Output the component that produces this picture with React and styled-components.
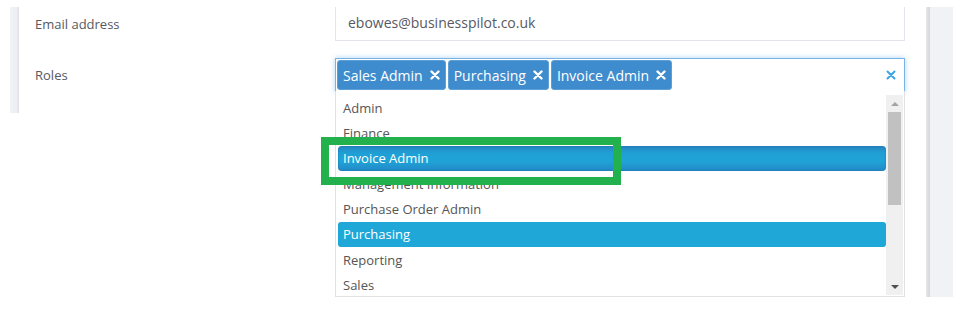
import React from 'react';
import styled, { createGlobalStyle } from 'styled-components';

const GlobalStyle = createGlobalStyle`
  html, body {
    margin: 0;
    padding: 0;
    background: #fff;
  }
  body {
    font-family: "Open Sans", "Liberation Sans", sans-serif;
  }
`;

// whole visible area, the card sits in it with a grey gutter on the right
const Page = styled.div`
  position: relative;
  width: 953px;
  height: 332px;
  overflow: hidden;
  box-sizing: border-box;
  padding-top: 7px;
  display: flex;
  align-items: flex-start;
`;

const LeftGap = styled.div`
  width: 10px;
  flex-shrink: 0;
`;

const Card = styled.div`
  width: 916px;
  flex-shrink: 0;
  display: flex;
  align-items: stretch;
`;

const CardEdge = styled.div`
  width: 9px;
  flex-shrink: 0;
  background: linear-gradient(to right, #f2f3f7 0%, #eceef3 75%, #dfe0e6 100%);
`;

const CardBody = styled.div`
  flex: 1;
  padding: 0 21px 21px 16px;
  display: flex;
  flex-direction: column;
  gap: 17px;
`;

const FormRow = styled.div`
  display: grid;
  grid-template-columns: 300px 570px;
  align-items: center;
`;

const Label = styled.div`
  font-size: 13px;
  color: #575962;
  padding-bottom: 1px;
`;

// top edge of this input is cut off in the shot
const TextInput = styled.div`
  height: 34px;
  box-sizing: border-box;
  border: 1px solid #e2e5ec;
  border-top: none;
  padding: 0 12px 3px;
  display: flex;
  align-items: center;
  font-size: 14px;
  color: #575962;
`;

const Select = styled.div`
  position: relative;
  height: 34px;
  box-sizing: border-box;
  border: 1px solid #7ab3e6;
  box-shadow: 0 0 5px rgba(102, 175, 233, 0.55);
  padding: 1px;
  display: flex;
  align-items: stretch;
  gap: 2px;
`;

const Tag = styled.div`
  display: flex;
  align-items: center;
  gap: 7px;
  padding: 0 5px 0 5px;
  background: #3e8ccd;
  border: 1px solid #5e9fd6;
  border-radius: 3px;
  color: #fff;
  font-size: 14px;
  white-space: nowrap;
`;

const ClearButton = styled.div`
  margin-left: auto;
  padding-right: 7px;
  display: flex;
  align-items: center;
`;

const Dropdown = styled.div`
  position: absolute;
  top: 100%;
  left: -1px;
  right: -1px;
  height: 206px;
  box-sizing: border-box;
  background: #fff;
  border: 1px solid #e2e2e6;
  border-top: none;
  padding: 4px 1px 0 2px;
  display: flex;
  align-items: flex-start;
  overflow: hidden;
  z-index: 2;
`;

const OptionList = styled.div`
  flex: 1;
  display: flex;
  flex-direction: column;
`;

const Option = styled.div`
  height: 25.33px;
  flex-shrink: 0;
  display: flex;
  align-items: center;
  padding: 0 5px;
  font-size: 13px;
  color: ${(p) => (p.$active || p.$selected ? '#fff' : '#555')};
  border-radius: ${(p) => (p.$active ? '4px' : '3px')};
  background: ${(p) =>
    p.$active
      ? 'linear-gradient(to bottom, #2784c1 0%, #1f9fd5 28%, #1fa4d7 60%, #2388c6 100%)'
      : p.$selected
      ? '#1fa7d7'
      : 'transparent'};
  box-shadow: ${(p) => (p.$active ? 'inset 0 0 2px rgba(20, 90, 150, 0.6)' : 'none')};
`;

const Scrollbar = styled.div`
  width: 17px;
  height: 200px;
  flex-shrink: 0;
  background: #f0f0f0;
  display: flex;
  flex-direction: column;
  align-items: center;
`;

const ArrowBox = styled.div`
  height: 17px;
  display: flex;
  align-items: center;
  justify-content: center;
`;

const Arrow = styled.div`
  width: 0;
  height: 0;
  border-left: 4px solid transparent;
  border-right: 4px solid transparent;
  ${(p) =>
    p.$down
      ? 'border-top: 4px solid #505050;'
      : 'border-bottom: 4px solid #a3a3a3;'}
`;

const Thumb = styled.div`
  width: 13px;
  height: 93px;
  background: #c1c1c1;
`;

const ScrollSpace = styled.div`
  flex: 1;
`;

const RightShade = styled.div`
  width: 4px;
  height: 290px;
  flex-shrink: 0;
  background: linear-gradient(to right, #e6e7ea, #d6d7db);
`;

const RightPanel = styled.div`
  flex: 1;
  height: 290px;
  background: #f1f2f6;
`;

// green annotation box drawn over the screenshot
const Highlight = styled.div`
  position: absolute;
  left: 321px;
  top: 137px;
  width: 300px;
  height: 48px;
  box-sizing: border-box;
  border: 8px solid #22b14c;
  z-index: 5;
`;

const Cross = ({ color, size = 10, width = 2.4 }) => (
  <svg width={size} height={size} viewBox="0 0 10 10">
    <path d="M1.5 1.5 L8.5 8.5 M8.5 1.5 L1.5 8.5" stroke={color} strokeWidth={width} strokeLinecap="round" />
  </svg>
);

const selectedRoles = ['Sales Admin', 'Purchasing', 'Invoice Admin'];

const options = [
  'Admin',
  'Finance',
  'Invoice Admin',
  'Management Information',
  'Purchase Order Admin',
  'Purchasing',
  'Reporting',
  'Sales',
];

function App() {
  return (
    <>
      <GlobalStyle />
      <Page>
        <LeftGap />
        <Card>
          <CardEdge />
          <CardBody>
            <FormRow>
              <Label>Email address</Label>
              <TextInput>ebowes@businesspilot.co.uk</TextInput>
            </FormRow>
            <FormRow>
              <Label>Roles</Label>
              <Select>
                {selectedRoles.map((role) => (
                  <Tag key={role}>
                    {role}
                    <Cross color="#fff" />
                  </Tag>
                ))}
                <ClearButton>
                  <Cross color="#3ba6e3" size={10} width={2} />
                </ClearButton>
                <Dropdown>
                  <OptionList>
                    {options.map((opt) => (
                      <Option
                        key={opt}
                        $active={opt === 'Invoice Admin'}
                        $selected={opt === 'Purchasing'}
                      >
                        {opt}
                      </Option>
                    ))}
                  </OptionList>
                  <Scrollbar>
                    <ArrowBox>
                      <Arrow />
                    </ArrowBox>
                    <Thumb />
                    <ScrollSpace />
                    <ArrowBox>
                      <Arrow $down />
                    </ArrowBox>
                  </Scrollbar>
                </Dropdown>
              </Select>
            </FormRow>
          </CardBody>
        </Card>
        <RightShade />
        <RightPanel />
        <Highlight />
      </Page>
    </>
  );
}

export default App;
